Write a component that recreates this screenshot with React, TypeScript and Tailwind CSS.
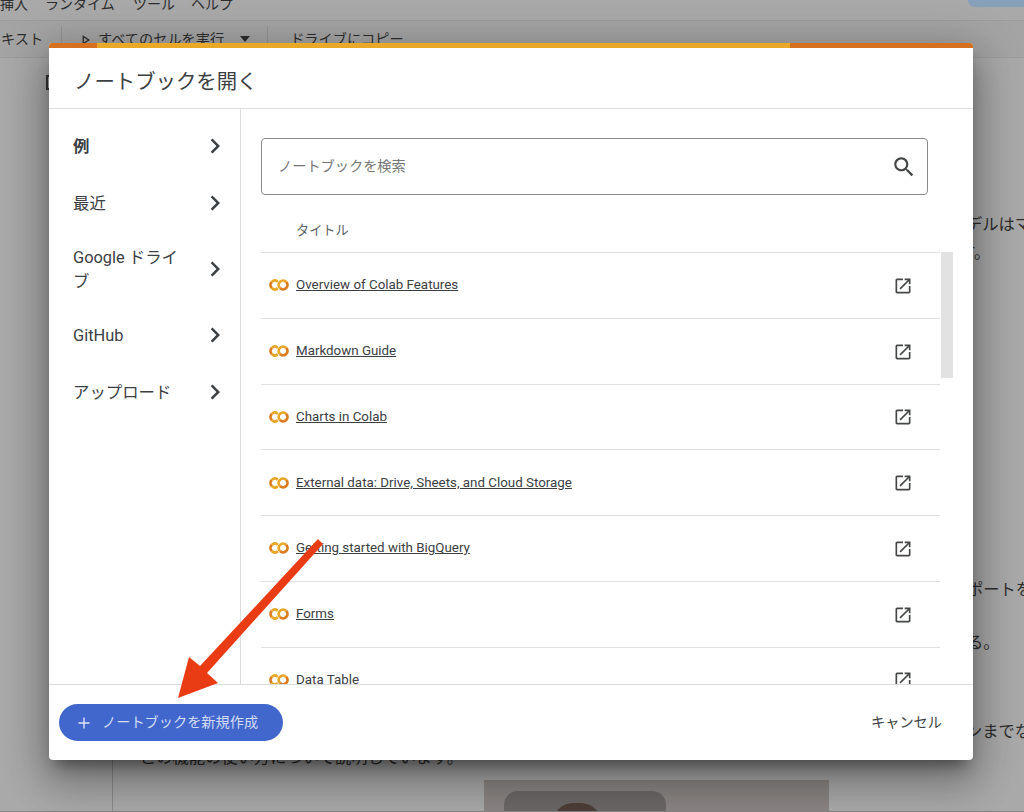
import React from 'react';

const notebooks = [
  'Overview of Colab Features',
  'Markdown Guide',
  'Charts in Colab',
  'External data: Drive, Sheets, and Cloud Storage',
  'Getting started with BigQuery',
  'Forms',
  'Data Table',
];

const sideItems = [
  { label: '例', active: true },
  { label: '最近' },
  { label: 'Google ドライブ', tall: true },
  { label: 'GitHub' },
  { label: 'アップロード' },
];

const ColabLogo = () => (
  <svg viewBox="0 0 24 24" className="w-[20px] h-[20px] shrink-0">
    <path fill="#DE7B1E" d="M4.54 9.46 2.19 7.1a6.93 6.93 0 0 0 0 9.79l2.36-2.36A3.59 3.59 0 0 1 4.54 9.46Z" />
    <path fill="#E8A526" d="M2.19 7.1 4.54 9.46a3.59 3.59 0 0 1 5.08 0l1.71-2.93-.1-.08A6.93 6.93 0 0 0 2.19 7.1Z" />
    <path fill="#E8A526" d="m11.34 17.46-1.72-2.92a3.59 3.59 0 0 1-5.08 0L2.19 16.9a6.93 6.93 0 0 0 9 .65l.11-.09" />
    <path fill="#E8A526" d="M12 7.1a6.93 6.93 0 0 0 0 9.79l2.36-2.36a3.59 3.59 0 1 1 5.08-5.08L21.81 7.1A6.93 6.93 0 0 0 12 7.1Z" />
    <path fill="#DE7B1E" d="m21.81 7.1-2.35 2.36a3.59 3.59 0 0 1-5.08 5.08L12 16.9A6.93 6.93 0 0 0 21.81 7.1Z" />
  </svg>
);

const OpenIcon = () => (
  <svg viewBox="0 0 24 24" className="w-[20px] h-[20px] mt-[1px] shrink-0 fill-[#444746]">
    <path d="M19 19H5V5h7V3H5c-1.11 0-2 .9-2 2v14c0 1.1.89 2 2 2h14c1.1 0 2-.9 2-2v-7h-2v7zM14 3v2h3.59l-9.83 9.83 1.41 1.41L19 6.41V10h2V3h-7z" />
  </svg>
);

const Chevron = () => (
  <svg viewBox="0 0 24 24" className="w-[30px] h-[30px] -mt-[1px] shrink-0 fill-[#3c4043]">
    <path d="M10 6L8.59 7.41 13.17 12l-4.58 4.59L10 18l6-6z" />
  </svg>
);

const Backdrop = () => (
  <div className="flex flex-col h-[812px] bg-[#a9a9a9] text-[#2e2e2e] border-b border-[#858585]">
    <div className="h-[21px] shrink-0 flex justify-between border-b border-[#9c9c9c] text-[14px] leading-[8px] overflow-hidden">
      <div className="flex">
        <span className="w-[45px]">挿入</span>
        <span className="w-[88px]">ランタイム</span>
        <span className="w-[58px]">ツール</span>
        <span>ヘルプ</span>
      </div>
      <div className="w-[56px] h-[7px] rounded-bl-[8px] bg-[#87a0b9]" />
    </div>
    <div className="h-[37px] shrink-0 flex items-center border-b border-[#9c9c9c] text-[14.2px] leading-5 bg-[#a4a4a4]">
      <span className="w-[61px] pl-px">キスト</span>
      <div className="w-px h-[26px] bg-[#929292]" />
      <svg viewBox="0 0 10 12" className="w-[8px] h-[10px] ml-[20px] mr-[8px] mt-[2px] fill-none stroke-[#2e2e2e] stroke-[1.6]">
        <path d="M1.5 1.5 8.5 6l-7 4.5z" />
      </svg>
      <span>すべてのセルを実行</span>
      <svg viewBox="0 0 10 6" className="w-[10px] h-[6px] ml-[16px] mr-[17px] fill-[#2e2e2e]">
        <path d="M0 0h10L5 6z" />
      </svg>
      <div className="w-px h-[26px] bg-[#929292]" />
      <span className="ml-[22px]">ドライブにコピー</span>
    </div>
    <div className="flex-1 flex min-h-0 overflow-hidden">
      <div className="w-[113px] shrink-0 border-r border-[#8a8a8a]">
        <div className="ml-[46px] mt-[17px] w-[8px] h-[15px] border-2 border-[#333]" />
      </div>
      <div className="flex-1 flex flex-col text-[16.3px] leading-6 whitespace-nowrap">
        <div className="mt-[155px] pl-[853px]">デルはマ</div>
        <div className="mt-[4px] pl-[830px]">ます。</div>
        <div className="mt-[313px] pl-[854px]">ポートを</div>
        <div className="mt-[29px] pl-[854px]">る。</div>
        <div className="mt-[65px] pl-[853px]">ンまでな</div>
        <div className="mt-[2px] pl-[27px]">この機能の使い方について説明しています。</div>
        <div className="mt-[10px] ml-[371px] w-[345px] h-[40px] shrink-0 bg-[#8a8583] pl-[20px] pt-[11px]">
          <div className="w-[162px] h-[40px] rounded-t-[14px] bg-[#6b6866] pl-[49px] pt-[12px]">
            <div className="w-[48px] h-[20px] rounded-t-full bg-[#4e3e38]" />
          </div>
        </div>
      </div>
    </div>
  </div>
);

const Dialog = () => (
  <div className="absolute left-[49px] top-[43px] w-[924px] h-[717px] flex flex-col bg-white rounded-[4px] overflow-hidden shadow-[0_11px_15px_-7px_rgba(0,0,0,0.45),0_24px_38px_3px_rgba(0,0,0,0.18),0_9px_46px_8px_rgba(0,0,0,0.2)]">
    <div className="h-[5px] shrink-0 flex bg-[#e9a825]">
      <div className="w-[48px] bg-[#d4701e]" />
      <div className="flex-1" />
      <div className="w-[183px] bg-[#d4701e]" />
    </div>
    <header className="h-[61px] shrink-0 flex items-center pl-[25px] pt-[8px] border-b border-[#e0e0e0] text-[20.4px] text-[#3c4043]">
      ノートブックを開く
    </header>
    <div className="flex-1 flex min-h-0">
      <nav className="w-[192px] shrink-0 border-r border-[#dcdcdc] pt-[9px] text-[16.4px] leading-6 text-[#3c4043]">
        {sideItems.map((item) => (
          <div key={item.label} className={`flex items-center justify-between pl-[24px] pr-[10px] ${item.tall ? 'h-[75px]' : 'h-[57px]'}`}>
            <span className={`w-[116px] ${item.active ? 'font-bold' : ''}`}>{item.label}</span>
            <Chevron />
          </div>
        ))}
      </nav>
      <div className="flex-1 min-w-0 pl-[20px] pt-[29px] overflow-hidden">
        <div className="w-[667px] h-[57px] flex items-center justify-between pl-[16px] pr-[10px] border border-[#8a8a8a] rounded-[4px] text-[14.2px] text-[#767676]">
          <span>ノートブックを検索</span>
          <svg viewBox="0 0 24 24" className="w-[26px] h-[26px] fill-[#444746]">
            <path d="M15.5 14h-.79l-.28-.27C15.41 12.59 16 11.11 16 9.5 16 5.91 13.09 3 9.5 3S3 5.91 3 9.5 5.91 16 9.5 16c1.61 0 3.09-.59 4.23-1.57l.27.28v.79l5 4.99L20.49 19l-4.99-5zm-6 0C7.01 14 5 11.99 5 9.5S7.01 5 9.5 5 14 7.01 14 9.5 11.99 14 9.5 14z" />
          </svg>
        </div>
        <div className="h-[57px] pl-[35px] pt-[26px] text-[13.2px] leading-5 text-[#5f6368]">タイトル</div>
        <div className="flex items-start">
          <div className="w-[679px] border-t border-[#e0e0e0] shrink-0">
            {notebooks.map((name) => (
              <div key={name} className="h-[65.75px] flex items-center border-b border-[#e0e0e0] pl-[8px] pr-[27px]">
                <ColabLogo />
                <span className="ml-[7px] flex-1 text-[13.35px] text-[#3c4043] underline">{name}</span>
                <OpenIcon />
              </div>
            ))}
          </div>
          <div className="ml-px w-[12px] h-[126px] bg-[#e2e2e2] shrink-0" />
        </div>
      </div>
    </div>
    <footer className="h-[76px] shrink-0 flex items-center justify-between border-t border-[#dcdcdc] pl-[10px] pr-[31px]">
      <button className="w-[224px] h-[37px] flex items-center rounded-full bg-[#4267cc] text-[14.2px] text-[#d3dcf5] pl-[19px]">
        <svg viewBox="0 0 12 12" className="w-[12px] h-[12px] mr-[12px] stroke-[#e0e6f8] stroke-[1.4]">
          <path d="M6 0.5v11M0.5 6h11" />
        </svg>
        ノートブックを新規作成
      </button>
      <button className="text-[14.2px] text-[#3c4043]">キャンセル</button>
    </footer>
  </div>
);

export default function App() {
  return (
    <div className="relative w-[1024px] h-[812px] overflow-hidden font-[Roboto,'Noto_Sans_CJK_JP',sans-serif]">
      <Backdrop />
      <Dialog />
      <svg viewBox="0 0 1024 812" className="absolute left-0 top-0 w-[1024px] h-[812px] pointer-events-none">
        <polygon fill="#ea3c14" points="318,539 323,544 207,673 218,683 178,698 189,657 200,666" />
      </svg>
    </div>
  );
}
